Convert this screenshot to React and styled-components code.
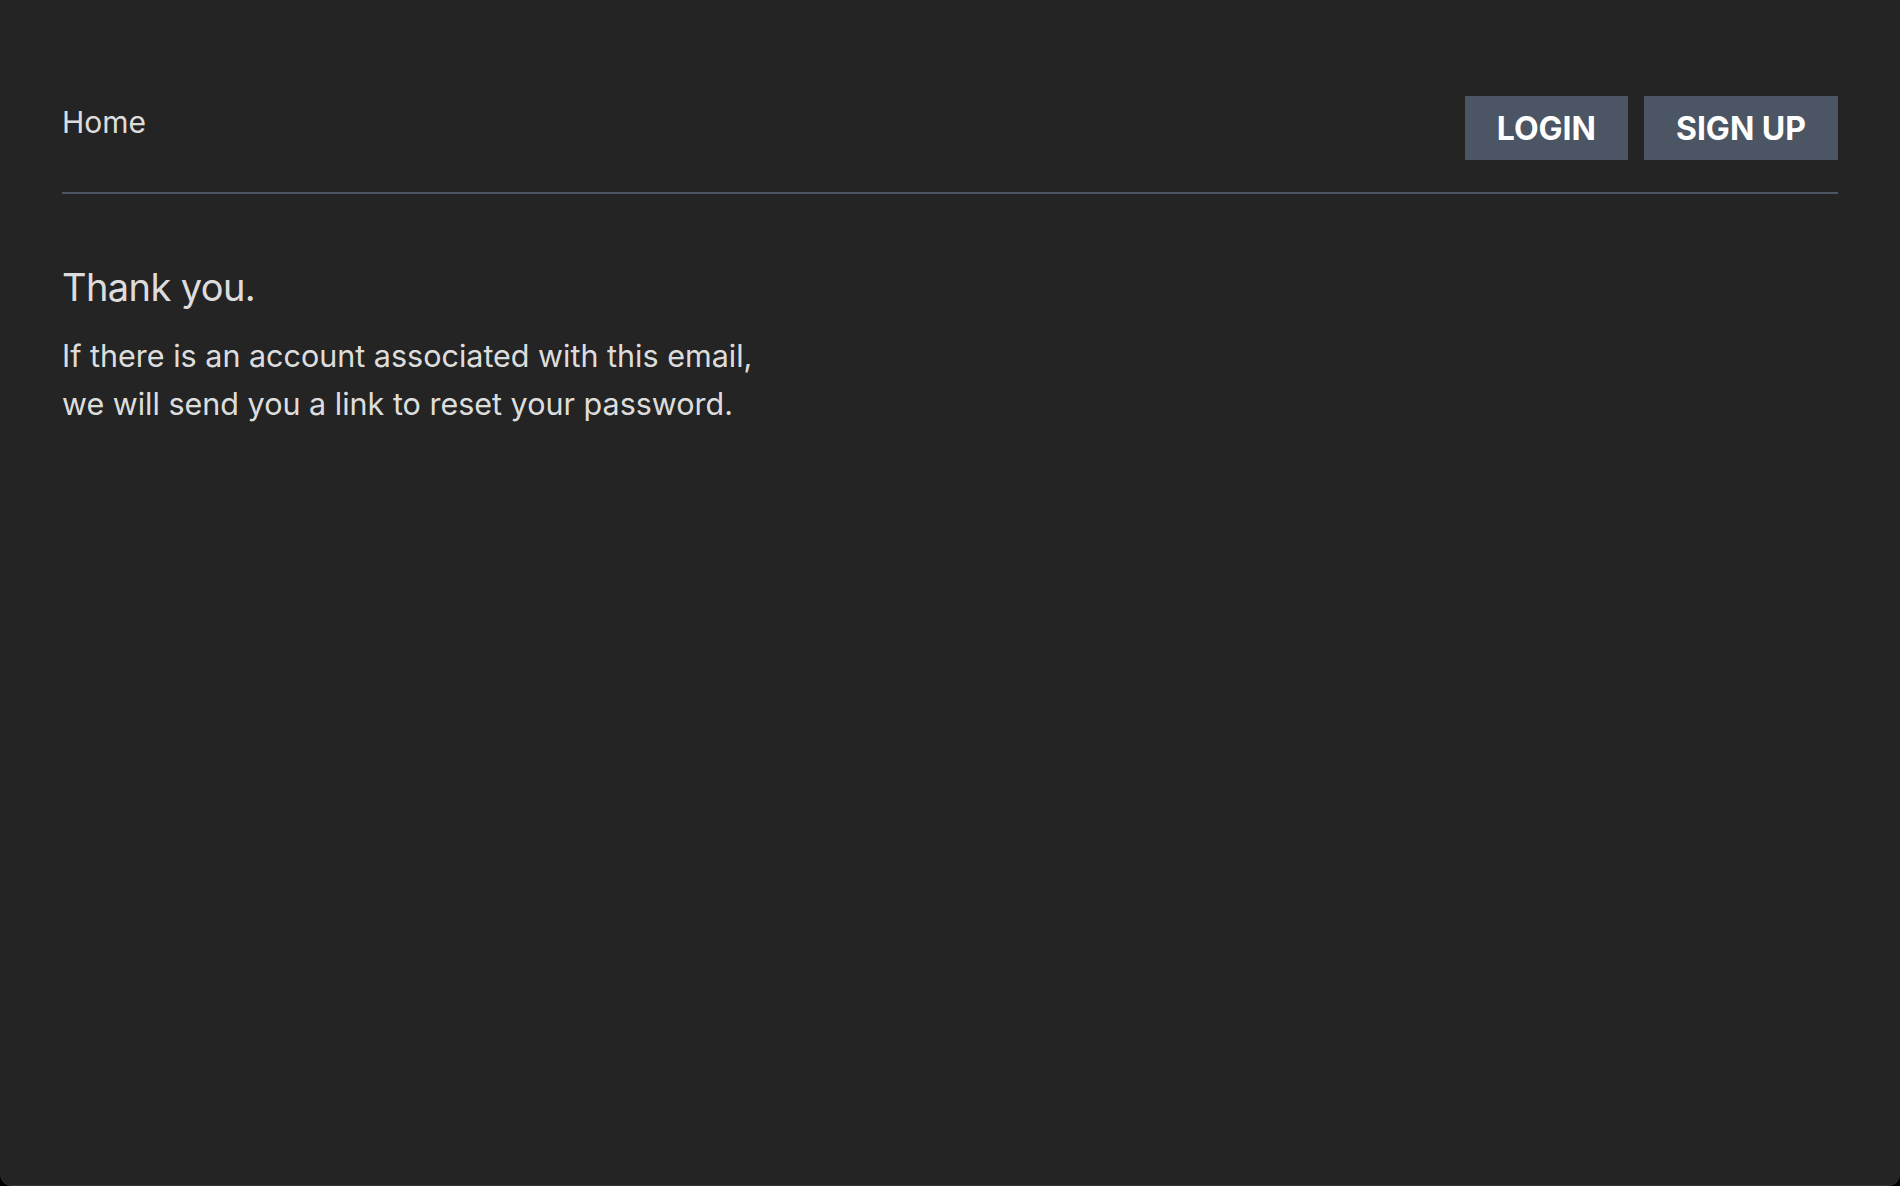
import React from "react";
import styled, { createGlobalStyle } from "styled-components";

const GlobalStyle = createGlobalStyle`
  html, body {
    margin: 0;
    padding: 0;
    background: #000;
  }
  body {
    font-family: Inter, "Noto Sans", "Liberation Sans", sans-serif;
    color: rgba(255, 255, 255, 0.87);
  }
  * { box-sizing: border-box; }
`;

const Page = styled.div`
  min-height: 100vh;
  background: #242424;
  border-radius: 0 0 12px 12px;
  box-shadow: inset 0 -1px 0 rgba(255, 255, 255, 0.08);
  padding: 96px 62px 0;
`;

const Header = styled.header`
  display: flex;
  justify-content: space-between;
  align-items: flex-start;
  padding-bottom: 32px;
  border-bottom: 2px solid #4b5563;
`;

const HomeLink = styled.a`
  margin-top: 4px;
  font-size: 30px;
  line-height: 45px;
  color: rgba(255, 255, 255, 0.87);
  text-decoration: none;
  cursor: pointer;
`;

const Actions = styled.nav`
  display: flex;
  gap: 16px;
`;

const NavButton = styled.button`
  height: 64px;
  padding: 0 32px;
  border: none;
  border-radius: 0;
  background: #4b5563;
  color: #ffffff;
  font-family: Inter, "Noto Sans", "Liberation Sans", sans-serif;
  font-size: 32px;
  font-weight: 700;
  text-transform: uppercase;
  cursor: pointer;
  display: flex;
  align-items: center;
  justify-content: center;
`;

const Main = styled.main`
  padding-top: 69px;
`;

const Title = styled.h1`
  margin: 0 0 21px;
  font-size: 38px;
  line-height: 48px;
  font-weight: 400;
  letter-spacing: -0.6px;
`;

const Message = styled.p`
  margin: 0;
  font-size: 30.5px;
  line-height: 48px;
  font-weight: 400;
`;

export default function App() {
  return (
    <>
      <GlobalStyle />
      <Page>
        <Header>
          <HomeLink>Home</HomeLink>
          <Actions>
            <NavButton>Login</NavButton>
            <NavButton>Sign Up</NavButton>
          </Actions>
        </Header>
        <Main>
          <Title>Thank you.</Title>
          <Message>
            If there is an account associated with this email,
            <br />
            we will send you a link to reset your password.
          </Message>
        </Main>
      </Page>
    </>
  );
}
